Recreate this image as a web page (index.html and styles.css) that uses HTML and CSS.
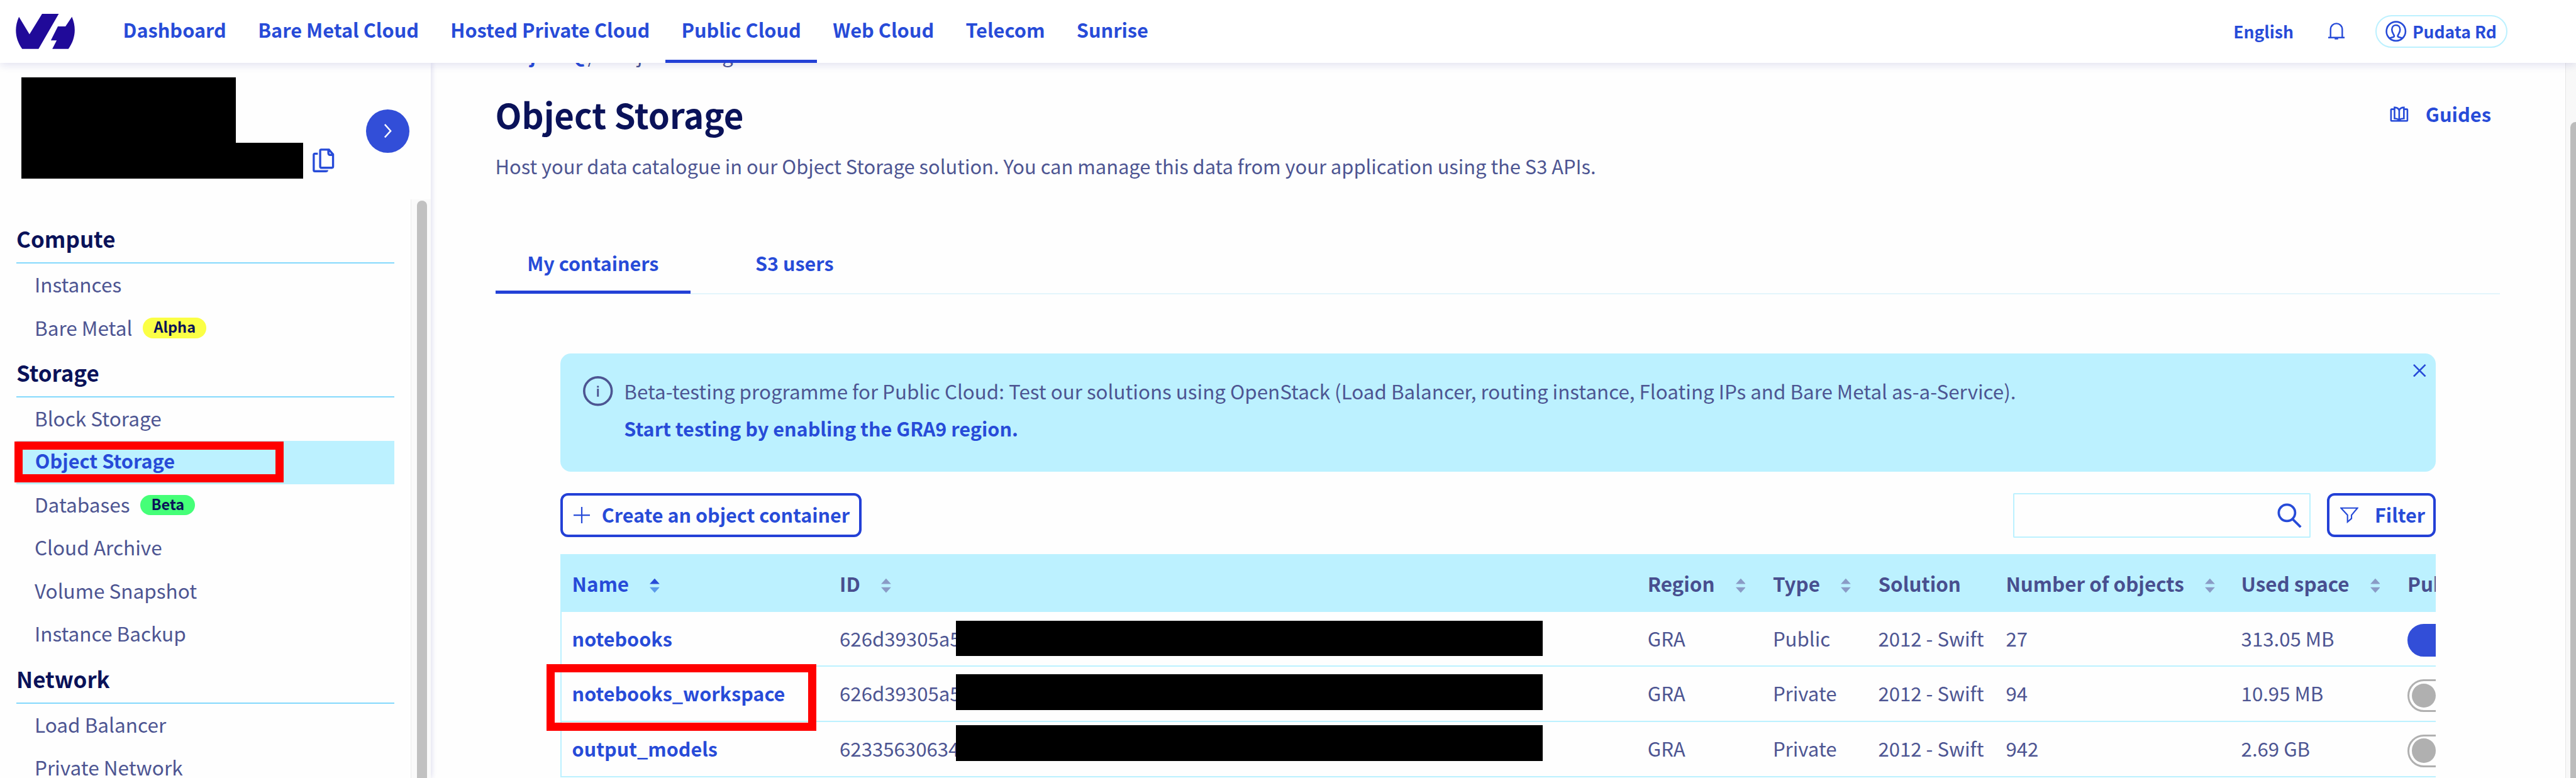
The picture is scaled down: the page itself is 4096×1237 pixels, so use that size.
FILE: index.html
```html
<!DOCTYPE html>
<html lang="en">
<head>
<meta charset="utf-8">
<title>Object Storage</title>
<link rel="stylesheet" href="styles.css">
</head>
<body>
<header class="topbar">
  <svg class="logo" viewBox="0 0 102 60"><path d="M5.500 5 23.500 35 45 0H73.500L39 60H11C-1 43-3 24 5.500 5ZM96 5C104 24 102 43 90 60H62.500L70 45.500H60L72 21.500H85Z"/></svg>
  <nav class="nav">
    <a class="nav-item">Dashboard</a>
    <a class="nav-item">Bare Metal Cloud</a>
    <a class="nav-item">Hosted Private Cloud</a>
    <a class="nav-item active">Public Cloud</a>
    <a class="nav-item">Web Cloud</a>
    <a class="nav-item">Telecom</a>
    <a class="nav-item">Sunrise</a>
  </nav>
  <div class="account">
    <span class="lang">English</span>
    <svg class="bell" viewBox="0 0 28 30"><path d="M4 25V12C4-2 24-2 24 12V25M0 25.5H28M11 27.5H17"/></svg>
    <span class="user">
      <svg class="user-icon" viewBox="0 0 36 36"><circle cx="18" cy="18" r="16.3"/><path d="M7 30C10 28 15 29 15 26C15 24 11 21 11 15C11 5 25 5 25 15C25 21 21 24 21 26C21 29 26 28 29 30"/></svg>
      <span>Pudata Rd</span>
    </span>
  </div>
</header>
<div class="page">
  <aside class="sidebar">
    <div class="project">
      <div class="mask mask-name"></div>
      <div class="project-id">
        <div class="mask mask-id"></div>
        <svg class="copy" viewBox="0 0 37 41"><path d="M14 2H28L35 10V31Q35 33 33 33H15Q13 33 13 31V4Q13 2 15 2M27 2V8Q27 11 30 11H35M9 9H4Q2 9 2 11V37Q2 39 4 39H22Q25 39 25 37"/></svg>
      </div>
      <button class="expand"><svg viewBox="0 0 14 24"><path d="M2 1 12 12 2 23"/></svg></button>
    </div>
    <div class="menu-wrap">
      <nav class="menu">
        <h2 class="menu-title">Compute</h2>
        <a class="menu-item">Instances</a>
        <a class="menu-item">Bare Metal<span class="badge alpha">Alpha</span></a>
        <h2 class="menu-title">Storage</h2>
        <a class="menu-item">Block Storage</a>
        <a class="menu-item current">Object Storage<span class="marker marker-menu"></span></a>
        <a class="menu-item">Databases<span class="badge beta">Beta</span></a>
        <a class="menu-item">Cloud Archive</a>
        <a class="menu-item">Volume Snapshot</a>
        <a class="menu-item">Instance Backup</a>
        <h2 class="menu-title">Network</h2>
        <a class="menu-item">Load Balancer</a>
        <a class="menu-item">Private Network</a>
      </nav>
      <div class="track"><div class="thumb"></div></div>
    </div>
  </aside>
  <main class="main">
    <div class="crumbs"><b>Project Q</b><span>/</span><span>Object Storage</span></div>
    <div class="heading">
      <h1 class="title">Object Storage</h1>
      <a class="guides"><svg viewBox="0 0 32 27"><path d="M8 5H3Q2 5 2 6V24Q2 25 3 25H29Q30 25 30 24V6Q30 5 29 5H24M16 24C14 21 11 21 8 21V2C12 2 15 4 16 7C17 4 20 2 24 2V21C21 21 18 21 16 24ZM16 7V24"/></svg>Guides</a>
    </div>
    <p class="lead">Host your data catalogue in our Object Storage solution. You can manage this data from your application using the S3 APIs.</p>
    <div class="tabs"><a class="tab active">My containers</a><a class="tab">S3 users</a></div>
    <section class="content">
      <div class="alert">
        <svg class="info" viewBox="0 0 52 52"><circle cx="26" cy="26" r="24"/><path d="M26 22V36M26 17V20"/></svg>
        <div class="alert-text">
          <p>Beta-testing programme for Public Cloud: Test our solutions using OpenStack (Load Balancer, routing instance, Floating IPs and Bare Metal as-a-Service).</p>
          <a>Start testing by enabling the GRA9 region.</a>
        </div>
        <svg class="close" viewBox="0 0 22 22"><path d="M1 1 21 21M21 1 1 21"/></svg>
      </div>
      <div class="toolbar">
        <button class="btn create"><svg viewBox="0 0 28 28"><path d="M14 0V28M0 14H28"/></svg>Create an object container</button>
        <div class="search"><svg viewBox="0 0 42 42"><circle cx="16.500" cy="16.500" r="14"/><path d="M26 27 40 41"/></svg></div>
        <button class="btn filter"><svg viewBox="0 0 32 28"><path d="M1.500 1.500H30.500L20 14V20L13 26V14Z"/></svg>Filter</button>
      </div>
      <div class="table">
        <div class="row head">
          <span class="sorted">Name<svg class="sort" viewBox="0 0 18 26"><path d="M9 0 18 10H0Z"/><path class="dim" d="M0 16H18L9 26Z"/></svg></span>
          <span>ID<svg class="sort" viewBox="0 0 18 26"><path d="M9 0 18 10H0ZM0 16H18L9 26Z"/></svg></span>
          <span>Region<svg class="sort" viewBox="0 0 18 26"><path d="M9 0 18 10H0ZM0 16H18L9 26Z"/></svg></span>
          <span>Type<svg class="sort" viewBox="0 0 18 26"><path d="M9 0 18 10H0ZM0 16H18L9 26Z"/></svg></span>
          <span>Solution</span>
          <span>Number of objects<svg class="sort" viewBox="0 0 18 26"><path d="M9 0 18 10H0ZM0 16H18L9 26Z"/></svg></span>
          <span>Used space<svg class="sort" viewBox="0 0 18 26"><path d="M9 0 18 10H0ZM0 16H18L9 26Z"/></svg></span>
          <span>Public</span>
        </div>
        <div class="row">
          <a>notebooks</a><span>626d39305a5<i class="mask mask-1"></i></span><span>GRA</span><span>Public</span><span>2012 - Swift</span><span>27</span><span>313.05 MB</span><span><i class="toggle on"></i></span>
        </div>
        <div class="row">
          <a>notebooks_workspace</a><span>626d39305a5<i class="mask mask-2"></i></span><span>GRA</span><span>Private</span><span>2012 - Swift</span><span>94</span><span>10.95 MB</span><span><i class="toggle"></i></span>
        </div>
        <div class="row">
          <a>output_models</a><span>62335630634<i class="mask mask-3"></i></span><span>GRA</span><span>Private</span><span>2012 - Swift</span><span>942</span><span>2.69 GB</span><span><i class="toggle"></i></span>
        </div>
      </div>
      <span class="marker marker-row"></span>
    </section>
  </main>
  <div class="page-track"><div class="page-thumb"></div></div>
</div>
</body>
</html>
```
FILE: styles.css
```css
html { font-size: 93.0909px; }
* { box-sizing: border-box; }
body {
  margin: 0;
  width: 44rem;
  height: 13.29rem;
  overflow: hidden;
  background: #fefefe;
  color: #4d5592;
  font: .3317rem/.4rem "Noto Sans CJK SC", "Noto Sans", sans-serif;
  white-space: nowrap;
}
svg { fill: none; stroke: currentColor; flex: none; display: block; }
p, h1, h2 { margin: 0; }
button { font: inherit; color: inherit; background: none; }
.mask { background: #000; }

.topbar {
  position: relative;
  z-index: 2;
  display: flex;
  height: 1.07rem;
  padding: 0 1.17rem 0 .27rem;
  background: #fff;
  color: #274bd8;
  font-size: .33rem;
  font-weight: 700;
  box-shadow: 0 .03rem .14rem rgba(20, 20, 140, .13);
}
.logo { width: 1.02rem; height: .6rem; margin-top: .24rem; fill: #200a99; stroke: none; }
.nav { display: flex; margin-left: .54rem; }
.nav-item { height: 1.07rem; padding: 0 .27rem; line-height: 1.02rem; }
.nav-item.active { border-bottom: .055rem solid #2340d6; }
.account { display: flex; align-items: center; margin-left: auto; font-size: .285rem; }
.lang { line-height: 1.05rem; }
.bell { width: .28rem; height: .3rem; margin: 0 .52rem 0 .595rem; stroke-width: 2.6; overflow: visible; }
.user {
  display: flex;
  align-items: center;
  width: 2.26rem;
  height: .56rem;
  padding-left: .155rem;
  border: .025rem solid #bcf1ff;
  border-radius: .28rem;
  line-height: .5rem;
}
.user-icon { width: .36rem; height: .36rem; margin-right: .1rem; stroke-width: 2.8; }

.page { display: flex; height: 12.22rem; }
.sidebar { position: relative; width: 7.36rem; box-shadow: 0 0 .1rem rgba(20, 20, 140, .18); background: #fefefe; }
.project { position: relative; height: 2.34rem; padding: .25rem 0 0 .37rem; color: #274bd8; }
.mask-name { width: 3.66rem; height: 1.12rem; }
.project-id { display: flex; }
.mask-id { width: 4.81rem; height: .61rem; }
.copy { width: .37rem; height: .41rem; margin: .1rem 0 0 .16rem; stroke-width: 3.6; }
.expand {
  position: absolute;
  left: 6.25rem;
  top: .8rem;
  display: flex;
  align-items: center;
  justify-content: center;
  width: .74rem;
  height: .74rem;
  padding: 0;
  border: 0;
  border-radius: 50%;
  background: #324ed8;
  color: #fff;
}
.expand svg { width: .14rem; height: .24rem; stroke-width: 2.6; }
.menu-wrap { display: flex; height: 9.88rem; overflow: hidden; }
.menu { width: 7.02rem; padding: .29rem .28rem 0; font-size: .339rem; }
.menu-title {
  height: .806rem;
  margin-bottom: .008rem;
  border-bottom: .032rem solid #85d9fd;
  color: #0a1259;
  font-size: .375rem;
  line-height: .762rem;
}
.menu-item {
  position: relative;
  display: flex;
  align-items: center;
  height: .736rem;
  padding: 0 0 .06rem .31rem;
  line-height: .676rem;
}
.menu-item.current { background: #bcf1ff; color: #274bd8; font-size: .33rem; font-weight: 700; padding-left: .32rem; }
.badge {
  height: .35rem;
  margin: .03rem 0 0 .18rem;
  padding: 0 .185rem;
  border-radius: .175rem;
  color: #0a1259;
  font-size: .253rem;
  font-weight: 700;
  line-height: .31rem;
}
.alpha { background: #fbff45; }
.beta { background: #45ff78; }
.marker { position: absolute; z-index: 1; border: .14rem solid #f00; }
.marker-menu { left: -.03rem; top: .005rem; width: 4.59rem; height: .7rem; }
.track { width: .34rem; padding: .02rem .07rem 0 .09rem; border-left: .02rem solid #ededed; background: #fafafa; }
.thumb { height: 10.5rem; border-radius: .09rem; background: #c1c1c1; }

.main { width: 36.46rem; padding-left: 1.1rem; }
.crumbs { display: flex; margin-top: -.34rem; padding-left: .02rem; }
.crumbs b { width: 1.5rem; color: #274bd8; text-align: right; }
.crumbs span { margin-left: .06rem; }
.crumbs span + span { margin-left: .26rem; }
.heading { display: flex; justify-content: space-between; margin-top: .43rem; padding-right: 1.27rem; }
.title { color: #0a1259; font-size: .586rem; line-height: .8rem; }
.guides { display: flex; color: #274bd8; font-weight: 700; line-height: .765rem; }
.guides svg { width: .32rem; height: .27rem; margin: .26rem .29rem 0 0; stroke-width: 2.8; }
.lead { margin-top: .276rem; }
.tabs {
  display: flex;
  gap: .56rem;
  width: 34.24rem;
  height: .844rem;
  margin-top: 1.15rem;
  border-bottom: .025rem solid #e3f5fc;
  color: #274bd8;
  font-size: .328rem;
  font-weight: 700;
  line-height: .62rem;
}
.tab { height: .83rem; padding: 0 .545rem; }
.tab.active { border-bottom: .055rem solid #2340d6; }
.content { position: relative; width: 32.04rem; margin: 1.005rem 0 0 1.11rem; }
.alert { position: relative; display: flex; height: 2.025rem; padding: .39rem .39rem 0; border-radius: .18rem; background: #bcf1ff; }
.info { width: .51rem; height: .51rem; stroke-width: 4; }
.info path { stroke-width: 3.2; }
.alert-text { margin: .01rem 0 0 .19rem; line-height: .635rem; }
.alert-text p { margin-top: -.075rem; font-size: .337rem; }
.alert-text a { color: #274bd8; font-size: .3285rem; font-weight: 700; }
.close { position: absolute; right: .17rem; top: .18rem; width: .22rem; height: .22rem; stroke: #274bd8; stroke-width: 2.8; }
.toolbar { display: flex; height: .765rem; margin-top: .365rem; color: #274bd8; font-size: .328rem; }
.btn { display: flex; align-items: center; height: .75rem; border: .045rem solid #2340d6; border-radius: .13rem; padding: 0 0 .01rem; font-weight: 700; }
.create { width: 5.15rem; padding-left: .185rem; }
.create svg { width: .28rem; height: .28rem; margin-right: .2rem; stroke-width: 2.4; }
.search { width: 5.08rem; margin-left: auto; padding: .145rem 0 0 4.49rem; border: .025rem solid #bcf1ff; border-radius: .02rem; }
.search svg { width: .42rem; height: .42rem; stroke-width: 4; }
.filter { width: 1.86rem; margin-left: .28rem; padding-left: .18rem; }
.filter svg { width: .31rem; height: .28rem; margin-right: .28rem; stroke-width: 2.4; }
.table { margin-top: .27rem; overflow: hidden; border-left: .022rem solid #bcf1ff; font-size: .335rem; }
.row {
  display: grid;
  grid-template-columns: 4.55rem 13.8rem 2.14rem 1.8rem 2.18rem 4.02rem 2.84rem 3rem;
  height: .942rem;
  border-bottom: .028rem solid #bcf1ff;
  line-height: .91rem;
}
.row > * { position: relative; padding-left: .2rem; }
.row > :first-child { padding-left: .18rem; }
.row > a { color: #274bd8; font-size: .328rem; font-weight: 700; line-height: .92rem; }
.row .mask { position: absolute; left: 2.19rem; width: 10.02rem; height: .605rem; }
.row .mask-1 { top: .15rem; }
.row .mask-2 { top: .13rem; }
.row .mask-3 { top: .055rem; }
.row.head { height: .99rem; border: 0; background: #bcf1ff; line-height: 1rem; font-weight: 700; color: #484f8f; font-size: .337rem; }
.head > * { display: flex; align-items: center; }
.head .sorted { color: #274bd8; }
.sort { width: .17rem; height: .26rem; margin: .09rem 0 0 .355rem; fill: #8a9bc6; stroke: none; }
.sorted .sort { fill: #274bd8; }
.sorted .dim { fill: #5b9bea; }
.toggle { display: block; width: 1.03rem; height: .56rem; margin-top: .21rem; padding: .04rem; border: .035rem solid #b0b0b0; border-radius: .28rem; }
.toggle::before { content: ""; display: block; width: .41rem; height: .41rem; border-radius: 50%; background: #b0b0b0; }
.toggle.on { border-color: #324ed8; background: #324ed8; }
.toggle.on::before { display: none; }
.marker-row { left: -.23rem; top: 5.31rem; width: 4.6rem; height: 1.14rem; }

.page-track { width: .18rem; padding: 1.01rem 0 0 .07rem; border-left: .02rem solid #e6e6e6; background: #f8f8f8; }
.page-thumb { height: 11.3rem; border-radius: .09rem 0 0; background: #bcbcbc; }
```
